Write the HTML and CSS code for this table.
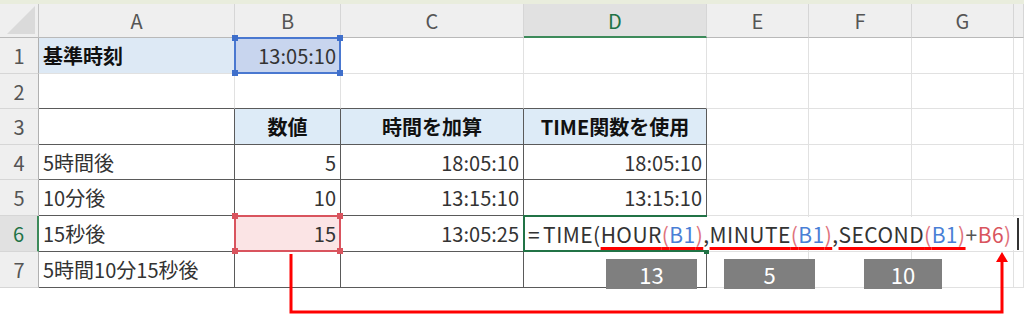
FILE: index.html
```html
<!DOCTYPE html>
<html lang="ja">
<head>
<meta charset="utf-8">
<title>TIME関数</title>
<link rel="stylesheet" href="styles.css">
</head>
<body>
<div class="page">
  <div class="topbar"></div>
  <div class="sheet">
    <div class="corner"><span class="tri"></span></div>
    <div class="ch">A</div>
    <div class="ch">B</div>
    <div class="ch">C</div>
    <div class="ch active">D</div>
    <div class="ch">E</div>
    <div class="ch">F</div>
    <div class="ch">G</div>
    <div class="ch"></div>

    <div class="rh">1</div>
    <div class="c fill-a1 bold">基準時刻</div>
    <div class="c num fill-b1">13:05:10
      <span class="refbox blue"><i class="h tl"></i><i class="h tr"></i><i class="h bl"></i><i class="h br"></i></span>
    </div>
    <div class="c"></div>
    <div class="c"></div>
    <div class="c"></div>
    <div class="c"></div>
    <div class="c"></div>
    <div class="c"></div>

    <div class="rh">2</div>
    <div class="c tb"></div>
    <div class="c tb"></div>
    <div class="c tb"></div>
    <div class="c tb"></div>
    <div class="c"></div>
    <div class="c"></div>
    <div class="c"></div>
    <div class="c"></div>

    <div class="rh">3</div>
    <div class="c t"></div>
    <div class="c t hd">数値</div>
    <div class="c t hd">時間を加算</div>
    <div class="c t hd">TIME関数を使用</div>
    <div class="c"></div>
    <div class="c"></div>
    <div class="c"></div>
    <div class="c"></div>

    <div class="rh">4</div>
    <div class="c t">5時間後</div>
    <div class="c t num">5</div>
    <div class="c t num">18:05:10</div>
    <div class="c t num">18:05:10</div>
    <div class="c"></div>
    <div class="c"></div>
    <div class="c"></div>
    <div class="c"></div>

    <div class="rh">5</div>
    <div class="c t">10分後</div>
    <div class="c t num">10</div>
    <div class="c t num">13:15:10</div>
    <div class="c t num">13:15:10</div>
    <div class="c"></div>
    <div class="c"></div>
    <div class="c"></div>
    <div class="c"></div>

    <div class="rh active">6</div>
    <div class="c t">15秒後</div>
    <div class="c t num fill-b6">15
      <span class="refbox red"><i class="h tl"></i><i class="h tr"></i><i class="h bl"></i><i class="h br"></i></span>
    </div>
    <div class="c t num">13:05:25</div>
    <div class="c t editing">
      <span class="activebox"><i class="fillhandle"></i></span>
      <span class="editor"><span class="k eq">=</span><span class="k">TIME(</span><span class="ul"><span class="k">HOUR</span><span class="p">(</span><span class="r1">B1</span><span class="p">)</span></span><span class="k">,</span><span class="ul"><span class="k">MINUTE</span><span class="p">(</span><span class="r1">B1</span><span class="p">)</span></span><span class="k">,</span><span class="ul"><span class="k">SECOND</span><span class="p">(</span><span class="r1">B1</span><span class="p">)</span></span><span class="op">+</span><span class="r2">B6</span><span class="p">)</span><span class="caret"></span></span>
    </div>
    <div class="c"></div>
    <div class="c"></div>
    <div class="c"></div>
    <div class="c"></div>

    <div class="rh">7</div>
    <div class="c t">5時間10分15秒後</div>
    <div class="c t"></div>
    <div class="c t"></div>
    <div class="c t"></div>
    <div class="c"></div>
    <div class="c"></div>
    <div class="c"></div>
    <div class="c"></div>
  </div>

  <div class="badge b-hour">13</div>
  <div class="badge b-min">5</div>
  <div class="badge b-sec">10</div>

  <svg class="arrow" width="1024" height="315" viewBox="0 0 1024 315">
    <polyline points="291,254 291,312 1002,312 1002,260" fill="none" stroke="#ff0000" stroke-width="3"/>
    <polygon points="1002,252 996,262 1008,262" fill="#ff0000"/>
  </svg>
</div>
</body>
</html>
```

FILE: styles.css
```css
* { box-sizing: border-box; }
html, body { margin: 0; padding: 0; background: #ffffff; }
body {
  font-family: "Noto Sans CJK JP", "Noto Sans", sans-serif;
  font-size: 20px;
  color: #333333;
}
.page {
  position: relative;
  width: 1024px;
  height: 315px;
  overflow: hidden;
}
.topbar {
  height: 4px;
  background: #e9eddd;
}
.sheet {
  display: grid;
  grid-template-columns: 39px 196px 106px 183px 183px 102px 103px 102px 10px;
  grid-template-rows: 34px 36px 35px 36px 35px 36px 36px 36px;
}
.corner {
  position: relative;
  background: #efefef;
  border-right: 1px solid #c4c4c4;
  border-bottom: 1px solid #b9b9b9;
}
.tri {
  position: absolute;
  right: 3px;
  bottom: 3px;
  width: 0;
  height: 0;
  border-left: 28px solid transparent;
  border-bottom: 28px solid #dadada;
}
.ch {
  background: #efefef;
  border-right: 1px solid #d6d6d6;
  border-bottom: 1px solid #b9b9b9;
  display: flex;
  align-items: center;
  justify-content: center;
  color: #555555;
}
.ch.active {
  background: #e1e1e1;
  color: #217346;
  border-bottom: 2px solid #3d8a5a;
}
.rh {
  background: #efefef;
  border-right: 1px solid #b0b0b0;
  border-bottom: 1px solid #d6d6d6;
  display: flex;
  align-items: center;
  justify-content: center;
  color: #555555;
}
.rh.active {
  background: #e1e1e1;
  color: #217346;
  border-right: 2px solid #3d8a5a;
}
.c {
  position: relative;
  border-right: 1px solid #e1e1e1;
  border-bottom: 1px solid #e1e1e1;
  display: flex;
  align-items: center;
  padding: 0 4px 0 4px;
  white-space: nowrap;
}
.c.num { justify-content: flex-end; }
.c.bold { font-weight: bold; color: #111111; }
.c.t {
  border-right-color: #5a5a5a;
  border-bottom-color: #5a5a5a;
}
.c.tb { border-bottom-color: #5a5a5a; }
.c.hd {
  background: #ddebf7;
  justify-content: center;
  font-weight: bold;
  color: #111111;
}
.fill-a1 { background: #dde9f5; }
.fill-b1 { background: #c8d5ee; }
.fill-b6 { background: #fbe4e5; }

.refbox {
  position: absolute;
  left: -1px;
  top: -1px;
  right: -1px;
  bottom: -1px;
  border: 2px solid;
  z-index: 2;
}
.refbox.blue { border-color: #4a78d0; }
.refbox.red { border-color: #d9545e; }
.h {
  position: absolute;
  width: 6px;
  height: 6px;
}
.blue .h { background: #3f6fcb; }
.red .h { background: #d9545e; }
.h.tl { left: -4px; top: -4px; }
.h.tr { right: -4px; top: -4px; }
.h.bl { left: -4px; bottom: -4px; }
.h.br { right: -4px; bottom: -4px; }

.editing { overflow: visible; }
.activebox {
  position: absolute;
  left: -1px;
  top: -1px;
  right: -1px;
  bottom: -1px;
  border: 2px solid #217346;
  z-index: 3;
}
.fillhandle {
  position: absolute;
  right: -4px;
  bottom: -4px;
  width: 5px;
  height: 5px;
  background: #217346;
}
.editor {
  position: absolute;
  left: 1px;
  top: 1px;
  height: 33px;
  width: 497px;
  background: #ffffff;
  z-index: 4;
  display: flex;
  align-items: center;
  padding-left: 3px;
  font-size: 21px;
  letter-spacing: 0.45px;
  color: #333333;
}
.eq { margin-right: 3px; }
.ul {
  text-decoration: underline;
  text-decoration-color: #ff0000;
  text-decoration-thickness: 3px;
  text-underline-offset: 4px;
  text-decoration-skip-ink: none;
}
.k { color: #333333; }
.p { color: #e0727c; }
.r1 { color: #4a7fd6; }
.r2 { color: #d9545e; }
.op { color: #555555; }
.caret {
  display: inline-block;
  width: 2px;
  height: 32px;
  margin-left: 5px;
  background: #333333;
}

.badge {
  position: absolute;
  top: 259px;
  height: 30px;
  background: #7f7f7f;
  color: #ffffff;
  font-size: 22px;
  display: flex;
  align-items: center;
  justify-content: center;
  z-index: 5;
}
.b-hour { left: 606px; width: 91px; }
.b-min { left: 724px; width: 91px; }
.b-sec { left: 864px; width: 78px; }

.arrow {
  position: absolute;
  left: 0;
  top: 0;
  z-index: 6;
  pointer-events: none;
}
```
